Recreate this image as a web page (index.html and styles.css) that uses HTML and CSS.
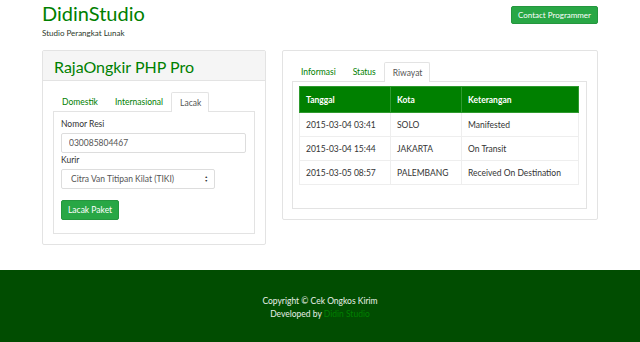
FILE: index.html
```html
<!DOCTYPE html>
<html lang="id">
<head>
    <meta charset="UTF-8" />
    <meta name="viewport" content="width=device-width, initial-scale=1.0" />
    <title>RajaOngkir PHP Pro</title>
    <link rel="stylesheet" href="styles.css">
</head>
<body>

<div class="container">
    <div class="header">
        <div class="brand">
            <h1>DidinStudio</h1>
            <p class="tagline">Studio Perangkat Lunak</p>
        </div>
        <button class="btn btn-contact">Contact Programmer</button>
    </div>

    <div class="row">
        <div class="panel panel-left">
            <div class="panel-heading">
                <h2>RajaOngkir PHP Pro</h2>
            </div>
            <div class="panel-body">
                <ul class="tabs">
                    <li>Domestik</li>
                    <li>Internasional</li>
                    <li class="active">Lacak</li>
                </ul>
                <div class="tab-content">
                    <label for="resi">Nomor Resi</label>
                    <input type="text" id="resi" class="input-resi" value="030085804467" />
                    <label for="kurir">Kurir</label>
                    <div class="select">
                        <span>Citra Van Titipan Kilat (TIKI)</span>
                        <span class="caret">&#9650;<br>&#9660;</span>
                    </div>
                    <button class="btn btn-lacak">Lacak Paket</button>
                </div>
            </div>
        </div>

        <div class="panel panel-right">
            <div class="panel-body">
                <ul class="tabs">
                    <li>Informasi</li>
                    <li>Status</li>
                    <li class="active">Riwayat</li>
                </ul>
                <div class="tab-content">
                    <table>
                        <thead>
                            <tr>
                                <th class="col-date">Tanggal</th>
                                <th class="col-city">Kota</th>
                                <th>Keterangan</th>
                            </tr>
                        </thead>
                        <tbody>
                            <tr>
                                <td>2015-03-04 03:41</td>
                                <td>SOLO</td>
                                <td>Manifested</td>
                            </tr>
                            <tr>
                                <td>2015-03-04 15:44</td>
                                <td>JAKARTA</td>
                                <td>On Transit</td>
                            </tr>
                            <tr>
                                <td>2015-03-05 08:57</td>
                                <td>PALEMBANG</td>
                                <td>Received On Destination</td>
                            </tr>
                        </tbody>
                    </table>
                </div>
            </div>
        </div>
    </div>
</div>

<footer>
    <p>Copyright &copy; Cek Ongkos Kirim</p>
    <p>Developed by <a href="#">Didin Studio</a></p>
</footer>

</body>
</html>
```

FILE: styles.css
```css
:root {
    --green: #008000;
    --btn-green: #28a745;
    --border: #e3e3e3;
    --footer-bg: #014d01;
}

body {
    font-family: 'Segoe UI', Lato, 'Open Sans', sans-serif;
    margin: 0;
    background: #fff;
    color: #333;
    font-size: 8.5px;
}

.container {
    width: 556px;
    margin: 0 auto;
    height: 270px;
}

.header {
    display: flex;
    justify-content: space-between;
    align-items: flex-start;
}

h1 {
    margin: 0;
    padding-top: 2px;
    font-size: 20px;
    font-weight: 400;
    color: var(--green);
    line-height: 23px;
}

.tagline {
    margin: 3px 0 0;
    font-size: 8px;
    color: #2b3a2b;
}

.btn {
    font-family: inherit;
    background: var(--btn-green);
    color: #fff;
    border: 1px solid #24963e;
    border-radius: 2px;
    cursor: pointer;
}

.btn-contact {
    margin-top: 6px;
    height: 18px;
    padding: 0 6px;
    font-size: 8px;
}

.row {
    display: flex;
    gap: 16px;
    margin-top: 12px;
    align-items: flex-start;
}

.panel {
    border: 1px solid var(--border);
    border-radius: 2px;
    background: #fff;
}

.panel-left {
    width: 222px;
}

.panel-right {
    width: 316px;
}

.panel-heading {
    background: #f5f5f5;
    border-bottom: 1px solid var(--border);
    height: 29px;
    padding-left: 11px;
}

h2 {
    margin: 0;
    font-size: 16px;
    font-weight: 400;
    color: var(--green);
    line-height: 31px;
}

.panel-left .panel-body {
    padding: 10px;
}

.panel-right .panel-body {
    padding: 10px 10px 10px 9px;
}

.tabs {
    list-style: none;
    margin: 0;
    padding: 0;
    display: flex;
    height: 20px;
}

.tabs li {
    padding: 0 7px 0 8px;
    line-height: 20px;
    color: var(--green);
    border: 1px solid transparent;
    border-bottom: none;
    border-radius: 2px 2px 0 0;
}

.tabs li.active {
    color: #555;
    border-color: var(--border);
    background: #fff;
    position: relative;
    top: 1px;
}

.tab-content {
    border: 1px solid var(--border);
}

.panel-left .tab-content {
    padding: 6px 8px 13px 7px;
}

.panel-right .tab-content {
    padding: 4px 7px 23px 6px;
}

label {
    display: block;
    line-height: 12px;
    margin-bottom: 3px;
}

.input-resi {
    display: block;
    box-sizing: border-box;
    width: 185px;
    height: 20px;
    border: 1px solid #ddd;
    border-radius: 2px;
    padding: 0 7px;
    font-family: inherit;
    font-size: 8.5px;
    color: #555;
    margin-bottom: 1px;
}

.select {
    box-sizing: border-box;
    width: 154px;
    height: 20px;
    border: 1px solid #ddd;
    border-radius: 2px;
    padding: 0 6px 0 9px;
    display: flex;
    justify-content: space-between;
    align-items: center;
    color: #555;
}

.caret {
    font-size: 3.5px;
    line-height: 4px;
    color: #333;
}

.btn-lacak {
    margin-top: 11px;
    height: 20px;
    padding: 0 6px;
    font-size: 8.5px;
}

table {
    width: 100%;
    border-collapse: collapse;
}

th, td {
    border: 1px solid #eee;
    text-align: left;
    padding: 0 6px;
    height: 23px;
}

th {
    background: var(--green);
    color: #fff;
    font-weight: 700;
    height: 25px;
    border-color: #2f9a2f;
}

.col-date {
    width: 78px;
}

.col-city {
    width: 58px;
}

footer {
    background: var(--footer-bg);
    height: 72px;
    text-align: center;
    color: #e8f0e8;
    font-size: 8.5px;
    padding-top: 25px;
    box-sizing: border-box;
}

footer p {
    margin: 0;
    line-height: 13px;
}

footer a {
    color: var(--green);
    text-decoration: none;
}
```
